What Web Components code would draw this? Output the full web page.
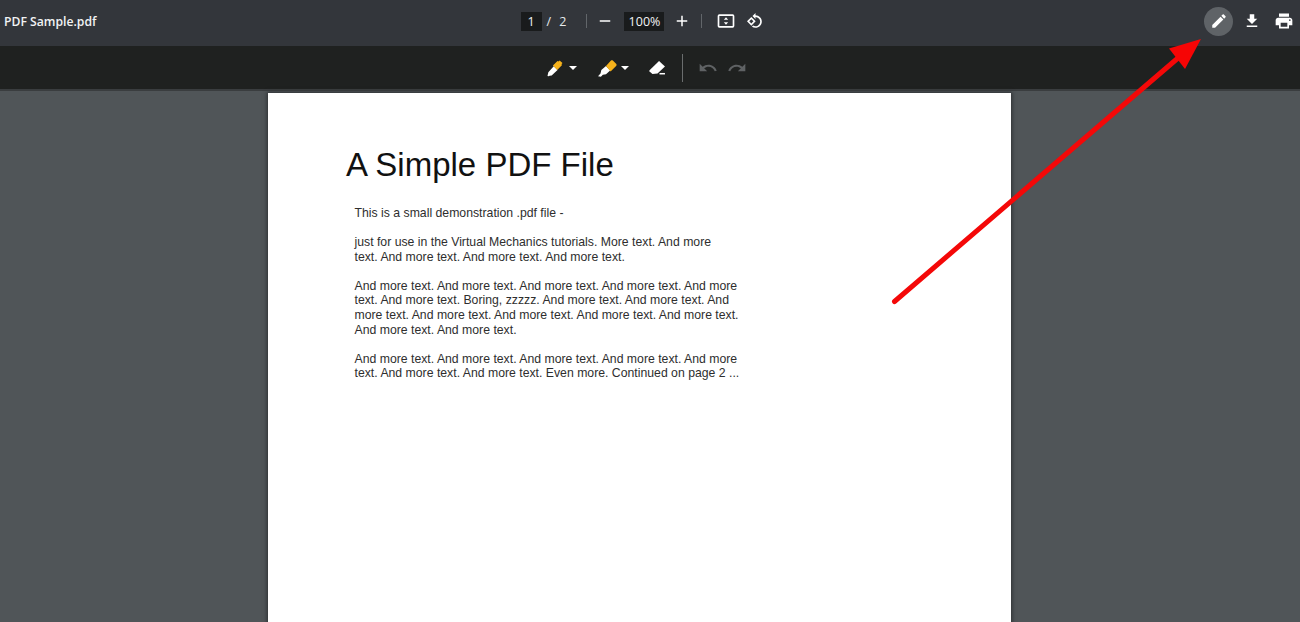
<!DOCTYPE html>
<html>
<head>
<meta charset="utf-8">
<title>PDF Sample.pdf</title>
<style>
  html, body { margin: 0; height: 100%; overflow: hidden; }
  body { position: relative; width: 1300px; height: 622px; font-family: "Liberation Sans", Arial, sans-serif; background: #505558; }
</style>
</head>
<body>
<pdf-viewer>
  <pdf-toolbar slot="top" title-text="PDF Sample.pdf"></pdf-toolbar>
  <annot-bar slot="top"></annot-bar>
  <pdf-page>
    <h1 slot="title">A Simple PDF File</h1>
    <pdf-para>This is a small demonstration .pdf file -</pdf-para>
    <pdf-para>just for use in the Virtual Mechanics tutorials. More text. And more<br>text. And more text. And more text. And more text.</pdf-para>
    <pdf-para>And more text. And more text. And more text. And more text. And more<br>text. And more text. Boring, zzzzz. And more text. And more text. And<br>more text. And more text. And more text. And more text. And more text.<br>And more text. And more text.</pdf-para>
    <pdf-para>And more text. And more text. And more text. And more text. And more<br>text. And more text. And more text. Even more. Continued on page 2 ...</pdf-para>
  </pdf-page>
</pdf-viewer>
<red-arrow></red-arrow>

<script>
class PdfViewer extends HTMLElement {
  connectedCallback() {
    this.attachShadow({ mode: 'open' });
    this.shadowRoot.innerHTML = `
      <style>
        :host { display: flex; flex-direction: column; height: 622px; overflow: hidden; }
        main { flex: 1; display: flex; justify-content: center; min-height: 0; padding: 2px 21px 0 0; background: #505558; }
      </style>
      <slot name="top"></slot>
      <main><slot></slot></main>
    `;
  }
}
customElements.define('pdf-viewer', PdfViewer);

class PdfIcon extends HTMLElement {
  static paths = {
    edit: '<path d="M3 17.25V21h3.75L17.81 9.94l-3.75-3.75L3 17.25zM20.71 7.04c.39-.39.39-1.02 0-1.41l-2.34-2.34c-.39-.39-1.02-.39-1.41 0l-1.83 1.83 3.75 3.75 1.83-1.83z"/>',
    download: '<path d="M19 9h-4V3H9v6H5l7 7 7-7zM5 18v2h14v-2H5z"/>',
    print: '<path d="M19 8H5c-1.66 0-3 1.34-3 3v6h4v4h12v-4h4v-6c0-1.66-1.34-3-3-3zm-3 11H8v-5h8v5zm3-7c-.55 0-1-.45-1-1s.45-1 1-1 1 .45 1 1-.45 1-1 1zm-1-9H6v4h12V3z"/>',
    undo: '<path d="M12.5 8c-2.65 0-5.05.99-6.9 2.6L2 7v9h9l-3.62-3.62c1.39-1.16 3.16-1.88 5.12-1.88 3.54 0 6.55 2.31 7.6 5.5l2.37-.78C21.08 11.03 17.15 8 12.5 8z"/>',
    redo: '<path d="M18.4 10.6C16.55 8.99 14.15 8 11.5 8c-4.65 0-8.58 3.03-9.96 7.22L3.9 16c1.05-3.19 4.05-5.5 7.6-5.5 1.95 0 3.73.72 5.12 1.88L13 16h9V7l-3.6 3.6z"/>',
    minus: '<path d="M19 13H5v-2h14v2z"/>',
    plus: '<path d="M19 13h-6v6h-2v-6H5v-2h6V5h2v6h6v2z"/>',
    fit: '<path fill-rule="evenodd" d="M4 4h16a2 2 0 0 1 2 2v12a2 2 0 0 1-2 2H4a2 2 0 0 1-2-2V6a2 2 0 0 1 2-2zm0 2v12h16V6H4z"/><path d="M12 7.5l2.6 3h-5.2zM12 16.5l-2.6-3h5.2z"/>',
    rotate: '<path fill-rule="evenodd" d="M7.6 7.2l5.2 5.2-5.2 5.2-5.2-5.2zm0 2.7l-2.5 2.5 2.5 2.5 2.5-2.5z"/><path d="M12.6 2.5v2.6c4.3.2 7.6 3.4 7.6 7.5 0 4.2-3.4 7.6-7.6 7.6-1.6 0-3.1-.5-4.3-1.3l1.4-1.4c.9.5 1.9.8 2.9.8 3.1 0 5.6-2.5 5.6-5.7 0-3-2.4-5.4-5.6-5.5v2.6L9 6z"/>',
    pen: '<path fill="#fff" d="M3 21.5l1-4.5 6.5-7 4.5 4.5-7 6.5-2.5.2-1 .8z"/><path fill="#f6b21b" d="M9.5 9l5.5-5.5 1.2.8 1.3-1.3 3.5 3-1.3 1.5.8 1-5.8 6z"/>',
    highlighter: '<path fill="#fff" d="M1.2 22l3-3.5 1-4 5.6-5 5 5.4-5 4.5-3.8.6-2.3 2.5z"/><path fill="#f6b21b" d="M10.8 9.5l5.7-6.2c.8-.8 2-.8 2.8 0l3.6 3.5c.8.8.8 2 0 2.8l-6.6 6.6z"/>',
    eraser: '<path fill="#fff" d="M15.2 3.8l7.5 7-9.4 8.8-6.4.6-3.700-3.100c-.5-.5-.5-1.100 0-1.600z"/><path fill="#fff" d="M15.800 18.900h6.900v1.900h-6.900z"/>'
  };
  connectedCallback() {
    const size = this.getAttribute('size') || 20;
    const name = this.getAttribute('name');
    this.attachShadow({ mode: 'open' });
    this.shadowRoot.innerHTML = `
      <style>
        :host { display: inline-flex; color: #fff; }
        svg { display: block; fill: currentColor; }
      </style>
      <svg width="${size}" height="${size}" viewBox="0 0 24 24">${PdfIcon.paths[name]}</svg>
    `;
  }
}
customElements.define('pdf-icon', PdfIcon);

class PdfToolbar extends HTMLElement {
  connectedCallback() {
    this.attachShadow({ mode: 'open' });
    this.shadowRoot.innerHTML = `
      <style>
        :host { display: grid; grid-template-columns: 1fr auto 1fr; align-items: center; box-sizing: border-box; height: 46px; padding-bottom: 4px; background: #33363b; color: #e8eaed; font: 13px "Open Sans", "Liberation Sans", sans-serif; }
        .name { padding-left: 4px; font-size: 12.2px; font-weight: 600; color: #f1f3f4; }
        .mid { display: flex; align-items: center; margin-right: 14px; }
        .box { display: flex; align-items: center; justify-content: center; height: 19px; background: #191b1c; font-size: 12.5px; color: #f1f3f4; }
        .page { width: 21px; }
        .of { margin: 0 0 0 5px; word-spacing: 5px; font-size: 12.5px; }
        .sep { width: 1px; height: 14px; background: #62666a; }
        .zoom { width: 40px; }
        .right { display: flex; align-items: center; justify-content: flex-end; }
        .pencil { display: flex; align-items: center; justify-content: center; width: 29px; height: 29px; border-radius: 50%; background: #5f6367; }
      </style>
      <div class="name">${this.getAttribute('title-text')}</div>
      <div class="mid">
        <span class="box page">1</span>
        <span class="of">/ 2</span>
        <span class="sep" style="margin-left:20px"></span>
        <pdf-icon name="minus" size="18" style="margin-left:9px"></pdf-icon>
        <span class="box zoom" style="margin-left:10px">100%</span>
        <pdf-icon name="plus" size="18" style="margin-left:9px"></pdf-icon>
        <span class="sep" style="margin-left:10px"></span>
        <pdf-icon name="fit" size="20" style="margin-left:14px"></pdf-icon>
        <pdf-icon name="rotate" size="20" style="margin-left:9px"></pdf-icon>
      </div>
      <div class="right">
        <span class="pencil"><pdf-icon name="edit" size="18"></pdf-icon></span>
        <pdf-icon name="download" size="18" style="margin-left:10px"></pdf-icon>
        <pdf-icon name="print" size="20" style="margin-left:13px;margin-right:6px"></pdf-icon>
      </div>
    `;
  }
}
customElements.define('pdf-toolbar', PdfToolbar);

class AnnotBar extends HTMLElement {
  connectedCallback() {
    this.attachShadow({ mode: 'open' });
    this.shadowRoot.innerHTML = `
      <style>
        :host { display: flex; align-items: center; justify-content: center; box-sizing: border-box; height: 45px; background: #1f2120; border-bottom: 2px solid #3a3d3f; }
        .caret { width: 0; height: 0; margin-left: 4px; border: 4px solid transparent; border-top: 4px solid #fff; border-bottom: 0; }
        .sep { width: 1px; height: 28px; background: #6a6d6e; }
        .row { display: flex; align-items: center; margin-right: 9px; }
      </style>
      <div class="row">
        <pdf-icon name="pen" size="20"></pdf-icon>
        <span class="caret"></span>
        <pdf-icon name="highlighter" size="20" style="margin-left:20px"></pdf-icon>
        <span class="caret"></span>
        <pdf-icon name="eraser" size="19" style="margin-left:18px"></pdf-icon>
        <span class="sep" style="margin-left:16px"></span>
        <pdf-icon name="undo" size="20" style="margin-left:15px;color:#5f6264"></pdf-icon>
        <pdf-icon name="redo" size="20" style="margin-left:9px;color:#5f6264"></pdf-icon>
      </div>
    `;
  }
}
customElements.define('annot-bar', AnnotBar);

class PdfPage extends HTMLElement {
  connectedCallback() {
    this.attachShadow({ mode: 'open' });
    this.shadowRoot.innerHTML = `
      <style>
        :host { display: block; box-sizing: border-box; width: 743px; height: 700px; background: #fff; box-shadow: 0 0 4px 1px #2c2f31; color: #1c1c1c; font-family: "Liberation Sans", Arial, sans-serif; padding: 52px 0 0 78px; }
        ::slotted(h1) { margin: 0 0 21px; font-size: 33px; line-height: 40px; font-weight: 400; color: #111; }
        .body { display: flex; flex-direction: column; gap: 14.5px; padding-left: 8.5px; }
      </style>
      <slot name="title"></slot>
      <div class="body"><slot></slot></div>
    `;
  }
}
customElements.define('pdf-page', PdfPage);

class PdfPara extends HTMLElement {
  connectedCallback() {
    this.attachShadow({ mode: 'open' });
    this.shadowRoot.innerHTML = `
      <style>
        :host { display: block; font-size: 12.25px; line-height: 14.6px; white-space: nowrap; color: #2e2e2e; }
      </style>
      <slot></slot>
    `;
  }
}
customElements.define('pdf-para', PdfPara);

class RedArrow extends HTMLElement {
  connectedCallback() {
    this.attachShadow({ mode: 'open' });
    this.shadowRoot.innerHTML = `
      <style>
        :host { position: absolute; left: 0; top: 0; width: 1300px; height: 622px; pointer-events: none; }
        svg { display: block; }
      </style>
      <svg width="1300" height="622" viewBox="0 0 1300 622">
        <line x1="894.5" y1="301.5" x2="1178" y2="58" stroke="#f40808" stroke-width="5" stroke-linecap="round"/>
        <path d="M1201 39L1169 48.5 1185 69z" fill="#f60505"/>
      </svg>
    `;
  }
}
customElements.define('red-arrow', RedArrow);
</script>
</body>
</html>
